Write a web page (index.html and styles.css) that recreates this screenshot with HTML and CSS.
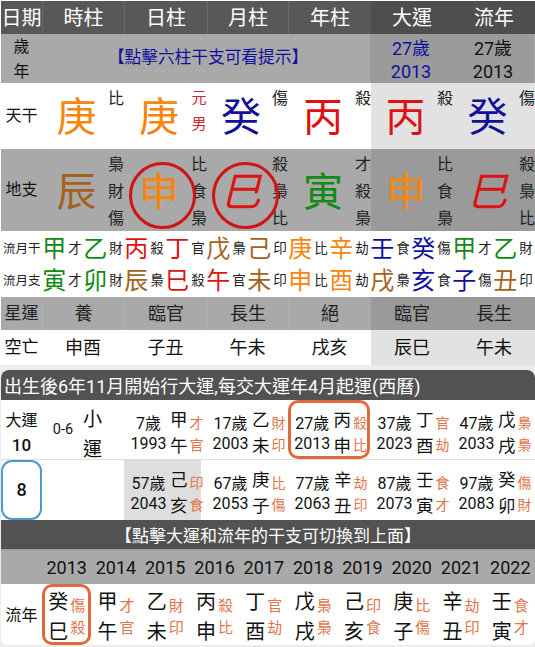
FILE: index.html
```html
<!DOCTYPE html>
<html lang="zh-Hant">
<head>
<meta charset="utf-8">
<title>八字</title>
<link rel="stylesheet" href="styles.css">
</head>
<body>
<section class="chart">
  <div class="row r-head">
    <div class="cell">日期</div><div class="cell sep">時柱</div><div class="cell sep">日柱</div><div class="cell sep">月柱</div><div class="cell sep">年柱</div><div class="cell alt">大運</div><div class="cell alt">流年</div>
  </div>
  <div class="row r-age">
    <div class="cell stack"><span>歲</span><span>年</span></div>
    <div class="cell hint ink-n">【點擊六柱干支可看提示】</div>
    <div class="cell alt stack num ink-n"><span>27歲</span><span>2013</span></div>
    <div class="cell alt stack num"><span>27歲</span><span>2013</span></div>
  </div>
  <div class="row r-stem">
    <div class="cell label">天干</div>
    <div class="cell gz"><b class="big ink-o">庚</b><i class="side"><span>比</span></i></div>
    <div class="cell gz"><b class="big ink-o">庚</b><i class="side gender"><span>元</span><span>男</span></i></div>
    <div class="cell gz"><b class="big ink-n">癸</b><i class="side"><span>傷</span></i></div>
    <div class="cell gz"><b class="big ink-r">丙</b><i class="side"><span>殺</span></i></div>
    <div class="cell gz alt"><b class="big ink-r">丙</b><i class="side"><span>殺</span></i></div>
    <div class="cell gz alt"><b class="big ink-n">癸</b><i class="side"><span>傷</span></i></div>
  </div>
  <div class="row r-branch">
    <div class="cell label">地支</div>
    <div class="cell gz"><b class="big ink-b">辰</b><i class="side"><span>梟</span><span>財</span><span>傷</span></i></div>
    <div class="cell gz"><b class="big ink-o ring">申</b><i class="side"><span>比</span><span>食</span><span>梟</span></i></div>
    <div class="cell gz"><b class="big ink-r ring slant">巳</b><i class="side"><span>殺</span><span>梟</span><span>比</span></i></div>
    <div class="cell gz"><b class="big ink-g">寅</b><i class="side"><span>才</span><span>殺</span><span>梟</span></i></div>
    <div class="cell gz alt"><b class="big ink-o">申</b><i class="side"><span>比</span><span>食</span><span>梟</span></i></div>
    <div class="cell gz alt"><b class="big ink-r slant">巳</b><i class="side"><span>殺</span><span>梟</span><span>比</span></i></div>
  </div>
  <div class="month">
    <div class="m-label">流月干</div>
    <div class="m"><b class="ink-g">甲</b><i>才</i></div><div class="m"><b class="ink-g">乙</b><i>財</i></div><div class="m"><b class="ink-r">丙</b><i>殺</i></div><div class="m"><b class="ink-r">丁</b><i>官</i></div><div class="m"><b class="ink-b">戊</b><i>梟</i></div><div class="m"><b class="ink-b">己</b><i>印</i></div><div class="m"><b class="ink-o">庚</b><i>比</i></div><div class="m"><b class="ink-o">辛</b><i>劫</i></div><div class="m"><b class="ink-n">壬</b><i>食</i></div><div class="m"><b class="ink-n">癸</b><i>傷</i></div><div class="m"><b class="ink-g">甲</b><i>才</i></div><div class="m"><b class="ink-g">乙</b><i>財</i></div>
    <div class="m-label">流月支</div>
    <div class="m"><b class="ink-g">寅</b><i>才</i></div><div class="m"><b class="ink-g">卯</b><i>財</i></div><div class="m"><b class="ink-b">辰</b><i>梟</i></div><div class="m"><b class="ink-r">巳</b><i>殺</i></div><div class="m"><b class="ink-r">午</b><i>官</i></div><div class="m"><b class="ink-b">未</b><i>印</i></div><div class="m"><b class="ink-o">申</b><i>比</i></div><div class="m"><b class="ink-o">酉</b><i>劫</i></div><div class="m"><b class="ink-b">戌</b><i>梟</i></div><div class="m"><b class="ink-n">亥</b><i>食</i></div><div class="m"><b class="ink-n">子</b><i>傷</i></div><div class="m"><b class="ink-b">丑</b><i>印</i></div>
  </div>
  <div class="row r-star">
    <div class="cell tag">星運</div><div class="cell sep">養</div><div class="cell sep">臨官</div><div class="cell sep">長生</div><div class="cell sep">絕</div><div class="cell alt">臨官</div><div class="cell alt">長生</div>
  </div>
  <div class="row r-void">
    <div class="cell tag">空亡</div><div class="cell">申酉</div><div class="cell">子丑</div><div class="cell">午未</div><div class="cell">戌亥</div><div class="cell alt">辰巳</div><div class="cell alt">午未</div>
  </div>
</section>

<section class="card">
  <div class="bar">出生後6年11月開始行大運,每交大運年4月起運(西曆)</div>
  <div class="luck">
    <div class="l-head"><span>大運</span><strong>10</strong></div>
    <div class="l-range">0-6</div>
    <div class="l-small"><span>小</span><span>運</span></div>
    <div class="lp"><div class="when"><span>7歲</span><span>1993</span></div><div class="gan"><span>甲</span><span>午</span></div><div class="god"><span>才</span><span>官</span></div></div>
    <div class="lp"><div class="when"><span>17歲</span><span>2003</span></div><div class="gan"><span>乙</span><span>未</span></div><div class="god"><span>財</span><span>印</span></div></div>
    <div class="lp on"><div class="when"><span>27歲</span><span>2013</span></div><div class="gan"><span>丙</span><span>申</span></div><div class="god"><span>殺</span><span>比</span></div></div>
    <div class="lp"><div class="when"><span>37歲</span><span>2023</span></div><div class="gan"><span>丁</span><span>酉</span></div><div class="god"><span>官</span><span>劫</span></div></div>
    <div class="lp"><div class="when"><span>47歲</span><span>2033</span></div><div class="gan"><span>戊</span><span>戌</span></div><div class="god"><span>梟</span><span>梟</span></div></div>
  </div>
  <div class="luck second">
    <div class="l-box">8</div>
    <div class="l-empty"></div>
    <div class="lp past"><div class="when"><span>57歲</span><span>2043</span></div><div class="gan"><span>己</span><span>亥</span></div><div class="god"><span>印</span><span>食</span></div></div>
    <div class="lp"><div class="when"><span>67歲</span><span>2053</span></div><div class="gan"><span>庚</span><span>子</span></div><div class="god"><span>比</span><span>傷</span></div></div>
    <div class="lp"><div class="when"><span>77歲</span><span>2063</span></div><div class="gan"><span>辛</span><span>丑</span></div><div class="god"><span>劫</span><span>印</span></div></div>
    <div class="lp"><div class="when"><span>87歲</span><span>2073</span></div><div class="gan"><span>壬</span><span>寅</span></div><div class="god"><span>食</span><span>才</span></div></div>
    <div class="lp"><div class="when"><span>97歲</span><span>2083</span></div><div class="gan"><span>癸</span><span>卯</span></div><div class="god"><span>傷</span><span>財</span></div></div>
  </div>
  <div class="bar center">【點擊大運和流年的干支可切換到上面】</div>
  <div class="years">
    <div></div><div>2013</div><div>2014</div><div>2015</div><div>2016</div><div>2017</div><div>2018</div><div>2019</div><div>2020</div><div>2021</div><div>2022</div>
  </div>
  <div class="annual">
    <div class="a-label">流年</div>
    <div class="a on"><div class="gan"><span>癸</span><span>巳</span></div><div class="god"><span>傷</span><span>殺</span></div></div>
    <div class="a"><div class="gan"><span>甲</span><span>午</span></div><div class="god"><span>才</span><span>官</span></div></div>
    <div class="a"><div class="gan"><span>乙</span><span>未</span></div><div class="god"><span>財</span><span>印</span></div></div>
    <div class="a"><div class="gan"><span>丙</span><span>申</span></div><div class="god"><span>殺</span><span>比</span></div></div>
    <div class="a"><div class="gan"><span>丁</span><span>酉</span></div><div class="god"><span>官</span><span>劫</span></div></div>
    <div class="a"><div class="gan"><span>戊</span><span>戌</span></div><div class="god"><span>梟</span><span>梟</span></div></div>
    <div class="a"><div class="gan"><span>己</span><span>亥</span></div><div class="god"><span>印</span><span>食</span></div></div>
    <div class="a"><div class="gan"><span>庚</span><span>子</span></div><div class="god"><span>比</span><span>傷</span></div></div>
    <div class="a"><div class="gan"><span>辛</span><span>丑</span></div><div class="god"><span>劫</span><span>印</span></div></div>
    <div class="a"><div class="gan"><span>壬</span><span>寅</span></div><div class="god"><span>食</span><span>才</span></div></div>
  </div>
</section>
</body>
</html>
```

FILE: styles.css
```css
* { box-sizing: border-box; }
html, body { height: 100%; }
body {
  margin: 0;
  overflow: hidden;
  background: #ececec;
  color: #111;
  font-family: Roboto, "Noto Sans CJK TC", sans-serif;
  font-size: 16px;
  line-height: 1;
}
b, i { font-weight: 400; font-style: normal; }

.ink-o { color: #f5860f; }
.ink-b { color: #a3621c; }
.ink-n { color: #10109c; }
.ink-r { color: #dd1212; }
.ink-g { color: #118a16; }

.chart { background: #fff; padding: 1px 0 0 1px; height: 365px; }
.row { display: grid; grid-template-columns: 41px 82px 83px 81px 83px 82px 82px; }
.cell { display: flex; align-items: center; justify-content: center; min-width: 0; }
.sep { border-left: 1px solid rgba(255, 255, 255, .1); }

.r-head { height: 33px; background: #585858; color: #fff; font-size: 20px; }
.r-head .alt { background: #4e4e4e; }

.r-age { height: 49px; background: #a9a9a9; grid-template-columns: 41px 328px 82px 82px; font-size: 16px; }
.r-age .alt { background: #9b9b9b; }
.stack { flex-direction: column; gap: 9px; padding-top: 1px; }
.num { font-size: 18px; gap: 5px; padding-top: 4px; }
.hint { font-size: 16.7px; padding-left: 4px; }

.r-stem { height: 66px; }
.r-stem .alt { background: #e2e2e2; }
.r-branch { height: 82px; background: #a9a9a9; }
.r-branch .alt { background: #9a9a9a; }
.label { font-size: 16px; }

.gz { justify-content: flex-start; align-items: stretch; }
.big {
  flex: 1;
  position: relative;
  display: flex;
  align-items: center;
  justify-content: center;
  padding: 3px 0 0 3px;
  font-size: 40px;
}
.r-branch .big { padding-top: 6px; }
.side {
  width: 16px;
  display: flex;
  flex-direction: column;
  align-items: center;
  color: #222;
  font-size: 16px;
}
.r-stem .side { padding-top: 8px; gap: 11px; }
.r-branch .side { padding-top: 8px; gap: 11px; }
.gender { color: #c62a32; font-size: 15px; }
.slant { font-style: italic; }
.ring::after {
  content: "";
  position: absolute;
  left: 5px;
  top: 13px;
  width: 61px;
  height: 61px;
  border: 3px solid #cf1414;
  border-radius: 50%;
}

.month {
  display: grid;
  grid-template-columns: 41px repeat(12, 41px);
  grid-auto-rows: 32px;
  height: 66px;
  padding-top: 2px;
  background: #fff;
}
.m-label { display: flex; align-items: center; font-size: 12.5px; color: #222; padding-left: 2px; white-space: nowrap; }
.m { display: flex; align-items: center; justify-content: center; gap: 2px; padding-right: 1px; }
.m b { font-size: 24px; }
.m i { font-size: 13.5px; color: #222; }

.r-star { height: 33px; background: #a9a9a9; font-size: 18px; color: #222; }
.r-star .alt { background: #9a9a9a; }
.r-void { height: 35px; font-size: 18px; color: #111; }
.r-void .alt { background: #e2e2e2; }
.tag { font-size: 17px; }

.card {
  margin: 5px 0 0 1px;
  background: #fff;
  border-radius: 8px 8px 6px 6px;
  overflow: hidden;
  height: 275px;
}
.bar {
  height: 30px;
  display: flex;
  align-items: center;
  padding: 3px 0 0 3px;
  background: #525252;
  color: #fff;
  font-size: 18px;
  white-space: nowrap;
}
.bar.center { justify-content: center; font-size: 17px; padding: 4px 0 0; border-bottom: 1px solid #999; }

.luck { display: grid; grid-template-columns: 41px 41px 41px repeat(5, 82px); height: 60px; border-bottom: 1px solid #ddd; }
.luck.second { grid-template-columns: 41px 82px repeat(5, 82px); border-bottom: 0; }
.l-head { display: flex; flex-direction: column; align-items: center; gap: 8px; padding-top: 13px; font-size: 16px; }
.l-head strong { font-weight: 500; font-size: 17px; }
.l-range { display: flex; align-items: center; justify-content: center; font-size: 14.5px; padding-top: 2px; padding-left: 1px; }
.l-small { display: flex; flex-direction: column; align-items: flex-start; gap: 11px; padding-top: 10px; font-size: 19px; }
.l-box {
  display: flex;
  align-items: center;
  justify-content: center;
  border: 2px solid #4c99d0;
  border-radius: 11px;
  font-size: 18px;
  font-weight: 500;
}
.lp { display: flex; align-items: center; gap: 3px; padding-left: 6px; white-space: nowrap; }
.lp.on { border: 3px solid #e06a3c; border-radius: 10px; padding-left: 3px; }
.lp.past { background: linear-gradient(#dedede, #dedede) left / 77px 100% no-repeat; }
.when { display: flex; flex-direction: column; align-items: center; width: 37px; font-size: 16px; gap: 4px; padding-top: 8px; }
.gan { display: flex; flex-direction: column; align-items: center; gap: 8.5px; padding-top: 8px; font-size: 17.5px; }
.god { display: flex; flex-direction: column; align-items: center; gap: 8px; margin-left: -1px; font-size: 14px; color: #e1744c; padding-top: 8px; }

.years {
  display: grid;
  grid-template-columns: 41px repeat(10, 1fr);
  height: 34px;
  padding-top: 2px;
  background: #a9a9a9;
  color: #111;
  font-size: 18px;
}
.years div { display: flex; align-items: center; justify-content: center; }

.annual { display: grid; grid-template-columns: 41px repeat(10, 1fr); height: 61px; }
.a-label { display: flex; align-items: center; justify-content: center; padding-top: 3px; font-size: 16px; }
.a { display: flex; align-items: center; justify-content: center; gap: 2px; }
.a.on { border: 3px solid #e06a3c; border-radius: 10px; }
.a .gan { font-size: 20px; gap: 10px; padding-top: 4px; }
.a .god { font-size: 15px; gap: 7px; padding-top: 5px; margin-left: 0; }
```
